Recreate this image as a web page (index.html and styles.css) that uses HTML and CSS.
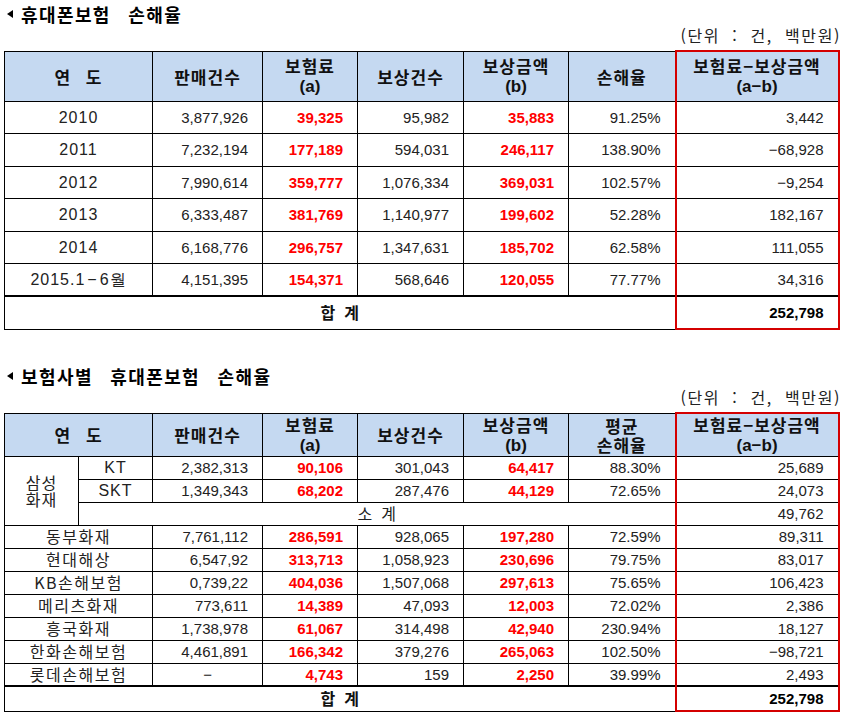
FILE: index.html
```html
<!DOCTYPE html>
<html lang="ko">
<head>
<meta charset="utf-8">
<title>휴대폰보험 손해율</title>
<link rel="stylesheet" href="styles.css">
</head>
<body>
<div class="page">
  <section class="block">
    <h2 class="title"><span class="tri"></span><span>휴대폰보험 손해율</span></h2>
    <div class="unit">(단위  :  건,  백만원)</div>
    <table class="grid t1">
      <colgroup>
        <col class="c-year"><col class="c-n1"><col class="c-n2"><col class="c-n3"><col class="c-n4"><col class="c-n5"><col class="c-n6">
      </colgroup>
      <thead>
        <tr class="hrow1">
          <th class="sp">연 도</th>
          <th>판매건수</th>
          <th>보험료<br><span class="lat">(a)</span></th>
          <th>보상건수</th>
          <th>보상금액<br><span class="lat">(b)</span></th>
          <th>손해율</th>
          <th class="r rt">보험료−보상금액<br><span class="lat">(a−b)</span></th>
        </tr>
      </thead>
      <tbody>
        <tr class="row1"><td class="yr">2010</td><td class="num">3,877,926</td><td class="num red">39,325</td><td class="num">95,982</td><td class="num red">35,883</td><td class="num">91.25%</td><td class="num r">3,442</td></tr>
        <tr class="row1"><td class="yr">2011</td><td class="num">7,232,194</td><td class="num red">177,189</td><td class="num">594,031</td><td class="num red">246,117</td><td class="num">138.90%</td><td class="num r">−68,928</td></tr>
        <tr class="row1"><td class="yr">2012</td><td class="num">7,990,614</td><td class="num red">359,777</td><td class="num">1,076,334</td><td class="num red">369,031</td><td class="num">102.57%</td><td class="num r">−9,254</td></tr>
        <tr class="row1"><td class="yr">2013</td><td class="num">6,333,487</td><td class="num red">381,769</td><td class="num">1,140,977</td><td class="num red">199,602</td><td class="num">52.28%</td><td class="num r">182,167</td></tr>
        <tr class="row1"><td class="yr">2014</td><td class="num">6,168,776</td><td class="num red">296,757</td><td class="num">1,347,631</td><td class="num red">185,702</td><td class="num">62.58%</td><td class="num r">111,055</td></tr>
        <tr class="row1"><td class="yr">2015.1<span class="dash">−</span>6월</td><td class="num">4,151,395</td><td class="num red">154,371</td><td class="num">568,646</td><td class="num red">120,055</td><td class="num">77.77%</td><td class="num r">34,316</td></tr>
        <tr class="row1 total"><td colspan="6" class="sum">합  계</td><td class="num r rb tot">252,798</td></tr>
      </tbody>
    </table>
  </section>

  <section class="block second">
    <h2 class="title"><span class="tri"></span><span>보험사별 휴대폰보험 손해율</span></h2>
    <div class="unit">(단위  :  건,  백만원)</div>
    <table class="grid t2">
      <colgroup>
        <col class="c-half"><col class="c-half"><col class="c-n1"><col class="c-n2"><col class="c-n3"><col class="c-n4"><col class="c-n5"><col class="c-n6">
      </colgroup>
      <thead>
        <tr class="hrow2">
          <th colspan="2" class="sp">연 도</th>
          <th>판매건수</th>
          <th>보험료<br><span class="lat">(a)</span></th>
          <th>보상건수</th>
          <th>보상금액<br><span class="lat">(b)</span></th>
          <th>평균<br>손해율</th>
          <th class="r rt">보험료−보상금액<br><span class="lat">(a−b)</span></th>
        </tr>
      </thead>
      <tbody>
        <tr class="row2"><td rowspan="3" class="co">삼성<br>화재</td><td class="tel">KT</td><td class="num">2,382,313</td><td class="num red">90,106</td><td class="num">301,043</td><td class="num red">64,417</td><td class="num">88.30%</td><td class="num r">25,689</td></tr>
        <tr class="row2"><td class="tel">SKT</td><td class="num">1,349,343</td><td class="num red">68,202</td><td class="num">287,476</td><td class="num red">44,129</td><td class="num">72.65%</td><td class="num r">24,073</td></tr>
        <tr class="row2"><td colspan="6" class="subsum">소  계</td><td class="num r">49,762</td></tr>
        <tr class="row2"><td colspan="2" class="name">동부화재</td><td class="num">7,761,112</td><td class="num red">286,591</td><td class="num">928,065</td><td class="num red">197,280</td><td class="num">72.59%</td><td class="num r">89,311</td></tr>
        <tr class="row2"><td colspan="2" class="name">현대해상</td><td class="num">6,547,92</td><td class="num red">313,713</td><td class="num">1,058,923</td><td class="num red">230,696</td><td class="num">79.75%</td><td class="num r">83,017</td></tr>
        <tr class="row2"><td colspan="2" class="name">KB손해보험</td><td class="num">0,739,22</td><td class="num red">404,036</td><td class="num">1,507,068</td><td class="num red">297,613</td><td class="num">75.65%</td><td class="num r">106,423</td></tr>
        <tr class="row2"><td colspan="2" class="name">메리츠화재</td><td class="num">773,611</td><td class="num red">14,389</td><td class="num">47,093</td><td class="num red">12,003</td><td class="num">72.02%</td><td class="num r">2,386</td></tr>
        <tr class="row2"><td colspan="2" class="name">흥국화재</td><td class="num">1,738,978</td><td class="num red">61,067</td><td class="num">314,498</td><td class="num red">42,940</td><td class="num">230.94%</td><td class="num r">18,127</td></tr>
        <tr class="row2"><td colspan="2" class="name">한화손해보험</td><td class="num">4,461,891</td><td class="num red">166,342</td><td class="num">379,276</td><td class="num red">265,063</td><td class="num">102.50%</td><td class="num r">−98,721</td></tr>
        <tr class="row2"><td colspan="2" class="name">롯데손해보험</td><td class="ctr">−</td><td class="num red">4,743</td><td class="num">159</td><td class="num red">2,250</td><td class="num">39.99%</td><td class="num r">2,493</td></tr>
        <tr class="row2b total"><td colspan="7" class="sum">합  계</td><td class="num r rb tot">252,798</td></tr>
      </tbody>
    </table>
  </section>
</div>
</body>
</html>
```

FILE: styles.css
```css
* { box-sizing: border-box; }

body {
  margin: 0;
  background: #ffffff;
  color: #111111;
  font-family: "Noto Sans CJK KR", "Liberation Sans", sans-serif;
}

.page {
  width: 844px;
  padding: 4px 0 0 4px;
}

.block.second {
  margin-top: 36px;
}

.title {
  margin: 0;
  height: 20px;
  display: flex;
  align-items: center;
  gap: 8px;
  padding-left: 3px;
  font-size: 18px;
  font-weight: 700;
  line-height: 20px;
  letter-spacing: 1.4px;
  word-spacing: 11px;
  color: #000;
}

.tri {
  width: 0;
  height: 0;
  border-top: 4px solid transparent;
  border-bottom: 4px solid transparent;
  border-right: 6px solid #000;
}

.unit {
  width: 837px;
  margin-top: 1px;
  text-align: right;
  font-size: 16px;
  line-height: 20px;
  letter-spacing: 1.6px;
  white-space: pre;
  color: #222;
}

.grid {
  border-collapse: collapse;
  table-layout: fixed;
  width: 835px;
  margin-top: 5px;
}

.c-year { width: 148px; }
.c-half { width: 74px; }
.c-n1 { width: 110px; }
.c-n2 { width: 95px; }
.c-n3 { width: 106px; }
.c-n4 { width: 105px; }
.c-n5 { width: 107px; }
.c-n6 { width: 163px; }

.grid th,
.grid td {
  border: 1px solid #000;
  padding: 0;
  vertical-align: middle;
  line-height: 17px;
}

.grid th {
  background: #c5d9f1;
  font-size: 17px;
  font-weight: 700;
  line-height: 19px;
  letter-spacing: 1px;
  text-align: center;
  color: #111;
}

.grid th.sp { word-spacing: 9px; }

.lat {
  font-family: "Liberation Sans", sans-serif;
  font-size: 17px;
  letter-spacing: 0;
}

.hrow1 { height: 50px; }
.hrow2 { height: 43px; }
.row1 { height: 32.5px; }
.row1.total { height: 33px; }
.row2 { height: 23px; }
.row2b { height: 25px; }

.grid .total td { border-top: 2px solid #000; }

.num {
  font-family: "Liberation Sans", sans-serif;
  font-size: 15px;
  text-align: right;
  padding-right: 14px !important;
  color: #222;
}

.num.red {
  color: #ff0000;
  font-weight: 700;
}

.num.tot {
  color: #000;
  font-weight: 700;
}

.yr {
  font-family: "Liberation Sans", sans-serif;
  font-size: 16px;
  text-align: center;
  letter-spacing: 1px;
  color: #222;
}

.dash { padding: 0 2px; }

.ctr {
  font-family: "Liberation Sans", sans-serif;
  font-size: 15px;
  text-align: center;
  color: #222;
}

.sum {
  text-align: center;
  font-size: 16px;
  font-weight: 700;
  white-space: pre;
  color: #111;
}

.subsum {
  text-align: center;
  font-size: 16px;
  white-space: pre;
  color: #222;
}

.co {
  text-align: center;
  font-size: 16px;
  letter-spacing: 1px;
  color: #222;
}

.tel {
  font-family: "Liberation Sans", sans-serif;
  text-align: center;
  font-size: 16px;
  letter-spacing: 1px;
  color: #222;
}

.name {
  text-align: center;
  font-size: 16px;
  letter-spacing: 1.5px;
  color: #222;
}

.grid .r {
  border-left: 2px solid #d40000;
  border-right: 2px solid #d40000;
}

.grid .rt { border-top: 2px solid #d40000; }
.grid .rb { border-bottom: 2px solid #d40000; }
```
